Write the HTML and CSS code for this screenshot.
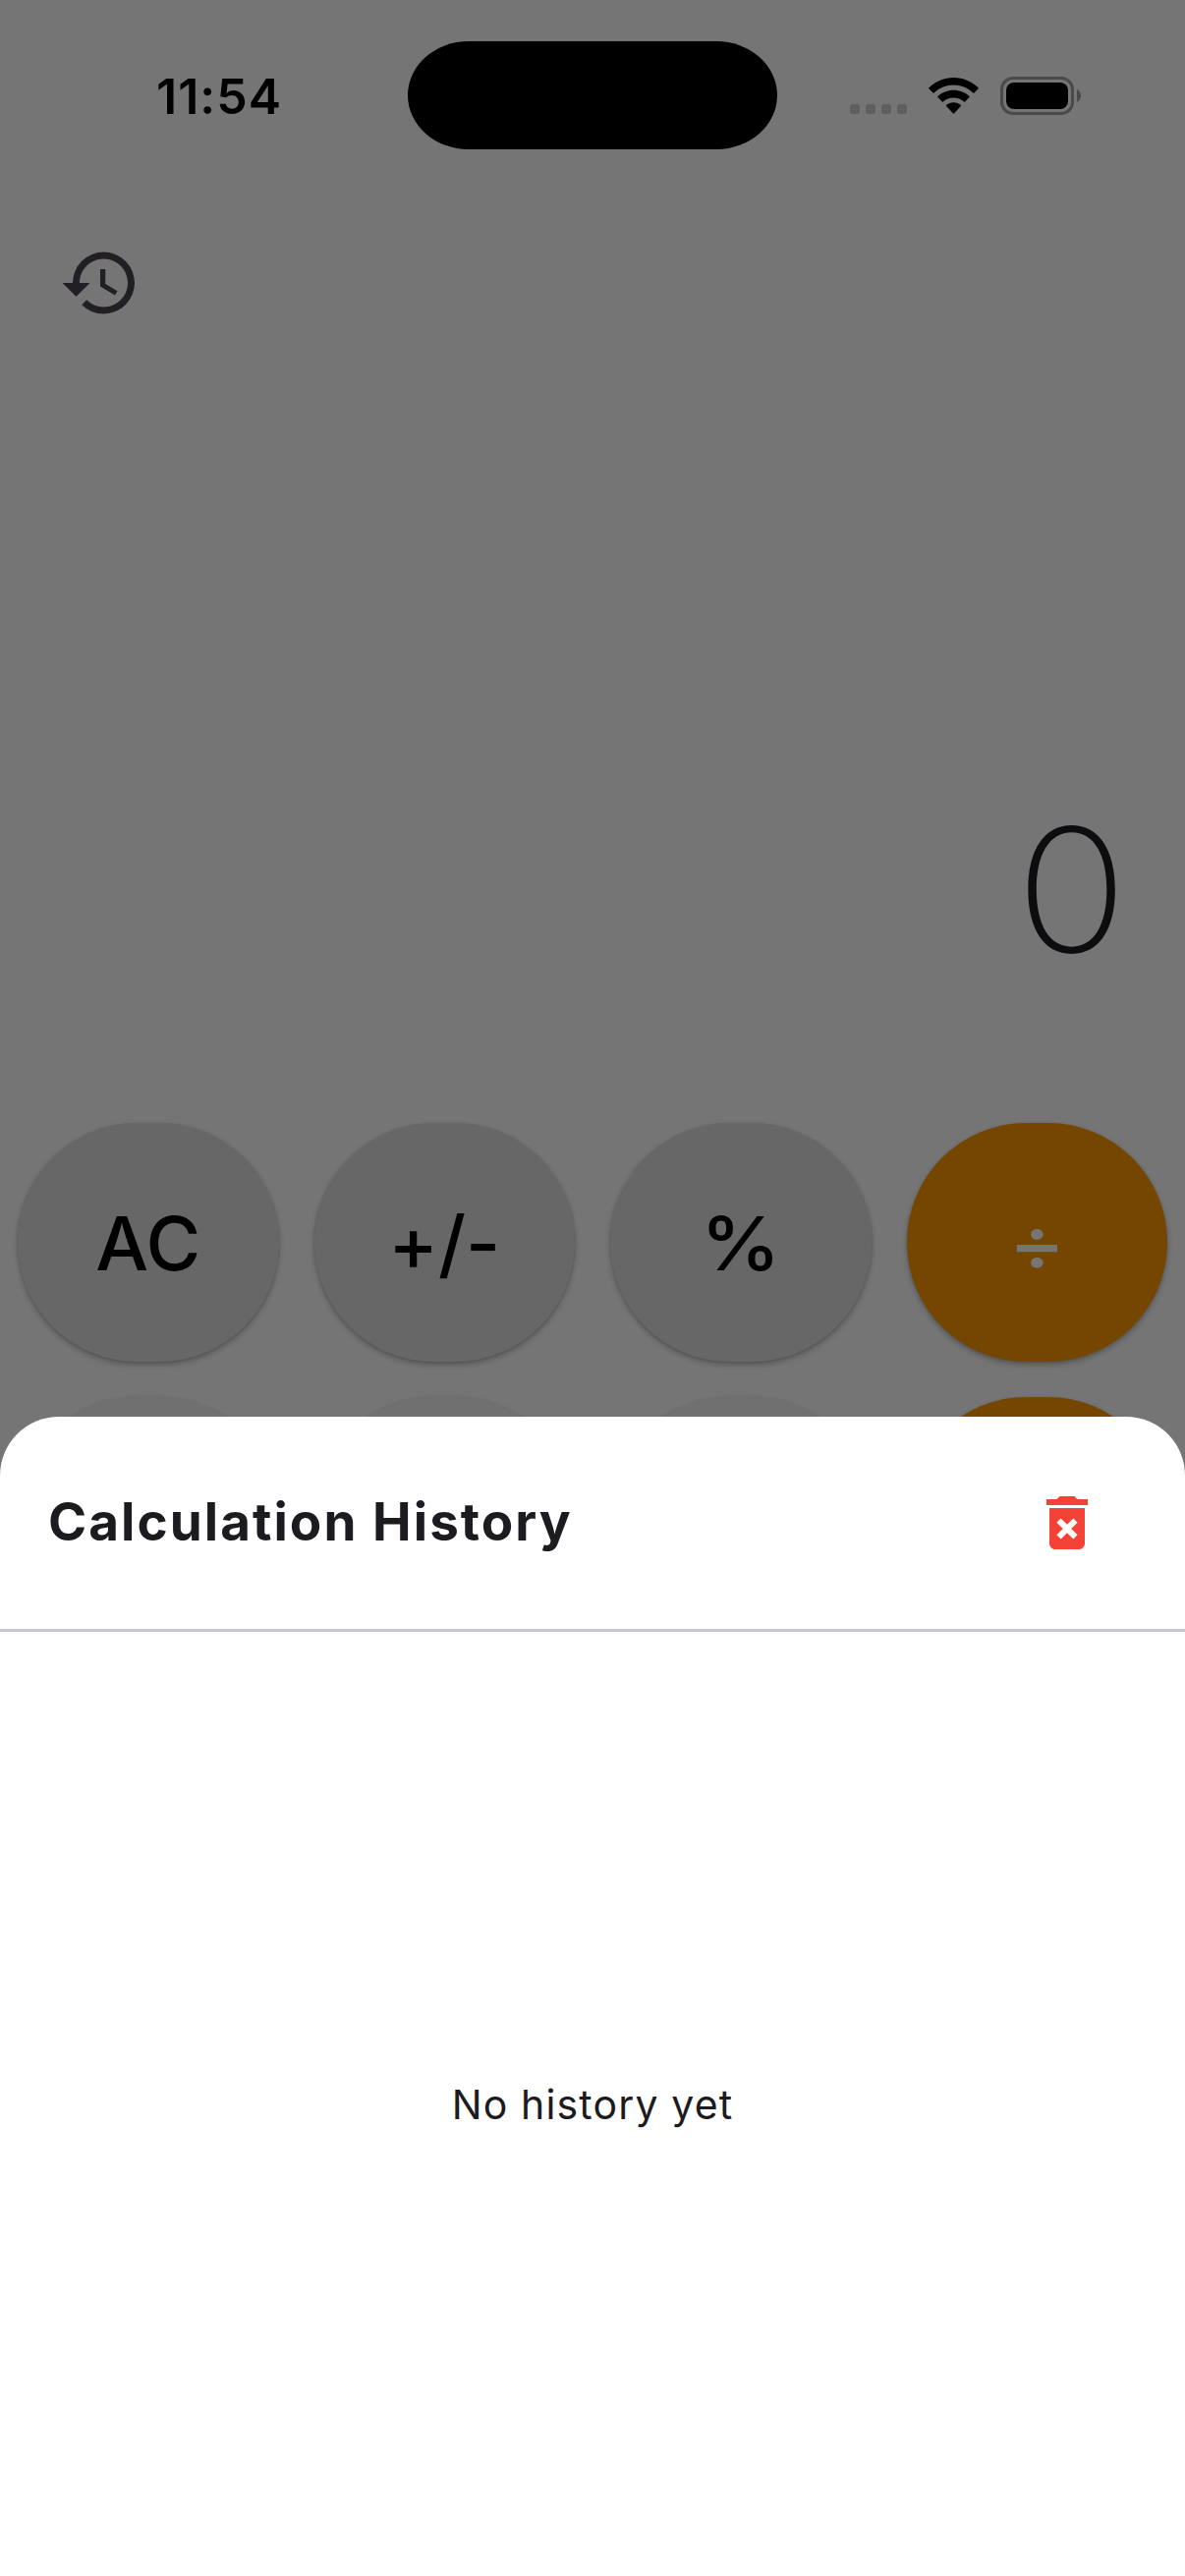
FILE: index.html
```html
<!DOCTYPE html>
<html lang="en">
<head>
<meta charset="utf-8">
<title>Calculator</title>
<link rel="stylesheet" href="styles.css">
</head>
<body>
<div class="phone">
  <main class="calculator">
    <div class="toolbar">
      <svg class="history-icon" viewBox="0 0 24 24"><path d="M13 3a9 9 0 0 0-9 9H1l3.89 3.89.07.14L9 12H6c0-3.87 3.13-7 7-7s7 3.13 7 7-3.13 7-7 7c-1.93 0-3.68-.79-4.94-2.06l-1.42 1.42A8.95 8.95 0 0 0 13 21a9 9 0 0 0 0-18zm-1 5v5l4.28 2.54.72-1.21-3.5-2.08V8H12z"/></svg>
    </div>
    <div class="display"><span class="display-value">0</span></div>
    <div class="keypad">
      <div class="key key-function">AC</div>
      <div class="key key-function">+/-</div>
      <div class="key key-function"><span class="wide-symbol">%</span></div>
      <div class="key key-operator"><span class="wide-symbol">÷</span></div>
      <div class="key"></div>
      <div class="key"></div>
      <div class="key"></div>
      <div class="key key-operator"></div>
    </div>
  </main>
  <div class="scrim"></div>
  <header class="status-bar">
    <div class="clock">11:54</div>
    <div class="island"></div>
    <div class="indicators">
      <div class="signal"><i></i><i></i><i></i><i></i></div>
      <svg class="wifi" viewBox="0 0 51 37">
        <path d="M25.500 0C35 0 44 3.800 50.600 10.300q.5.500 0 1L46.400 15.500q-.6.500-1.100 0C40 10.500 33 7.600 25.500 7.600S11 10.500 5.700 15.500q-.5.500-1.100 0L.4 11.300q-.5-.5 0-1C7 3.800 16 0 25.500 0z"/>
        <path d="M25.500 12.800c6.100 0 11.700 2.300 16 6.100q.6.500 0 1.100l-4.300 4.400q-.5.500-1.100 0c-2.900-2.500-6.600-4-10.600-4s-7.700 1.500-10.600 4q-.6.500-1.100 0L9.500 20q-.6-.6 0-1.100c4.300-3.800 9.900-6.100 16-6.100z"/>
        <path d="M25.500 25.300c2.800 0 5.300.9 7.300 2.500q.7.600.1 1.200l-6.700 7.300q-.7.700-1.400 0L18.100 29q-.6-.6.100-1.200c2-1.600 4.500-2.500 7.300-2.500z"/>
      </svg>
      <svg class="battery" viewBox="0 0 82 39">
        <rect class="battery-case" x="1.500" y="1.500" width="72" height="36" rx="11.500"/>
        <rect x="6" y="6" width="63" height="27" rx="8"/>
        <path class="battery-tip" d="M78 13c2.500 1 4 3.500 4 6.500s-1.500 5.500-4 6.500z"/>
      </svg>
    </div>
  </header>
  <section class="sheet">
    <div class="sheet-header">
      <h1 class="sheet-title">Calculation History</h1>
      <svg class="delete-icon" viewBox="0 0 24 24"><path d="M6 19c0 1.100.9 2 2 2h8c1.100 0 2-.9 2-2V7H6v12zm2.460-7.120 1.410-1.410L12 12.590l2.120-2.120 1.410 1.410L13.410 14l2.120 2.120-1.410 1.410L12 15.410l-2.120 2.120-1.410-1.410L10.590 14l-2.130-2.120zM15.500 4l-1-1h-5l-1 1H5v2h14V4z"/></svg>
    </div>
    <div class="sheet-body"><p class="empty">No history yet</p></div>
  </section>
</div>
</body>
</html>
```
FILE: styles.css
```css
* { box-sizing: border-box; }

body {
  margin: 0;
  font-family: Inter, "Liberation Sans", sans-serif;
  color: #1d1b20;
  background: #fff;
}

/* Every layer shares the one grid cell */
.phone {
  display: grid;
  grid-template: 2622px / 1206px;
  width: 1206px;
  height: 2622px;
  overflow: hidden;
}
.phone > * { grid-area: 1 / 1; }

.calculator {
  display: flex;
  flex-direction: column;
  padding-top: 246px;
}
.toolbar { height: 84px; padding-left: 60px; }
.history-icon { display: block; width: 84px; height: 84px; fill: #49454f; }

.display {
  display: flex;
  justify-content: flex-end;
  align-items: flex-end;
  height: 795px;
  padding: 0 58px 110px 0;
}
.display-value {
  font-size: 175px;
  line-height: 220px;
  font-weight: 200;
  transform: scaleX(1.08);
  transform-origin: right;
}

.keypad {
  display: grid;
  grid-template-columns: repeat(4, 265.5px);
  grid-auto-rows: 243px;
  gap: 36px;
  padding: 18px;
}
.key {
  display: flex;
  align-items: center;
  justify-content: center;
  border-radius: 122px;
  background: #f5f5f5;
  box-shadow: 0 3px 6px rgba(0, 0, 0, .26), 0 1px 3px rgba(0, 0, 0, .1);
  color: #000;
  font-size: 76px;
  line-height: 90px;
  font-weight: 460;
}
.key-function { background: #e0e0e0; }
.key-operator { background: #ff9800; color: #fff; }
.wide-symbol { transform: scaleX(1.08); }
.key-operator .wide-symbol { transform: scaleX(1.15); }

.scrim { background: rgba(0, 0, 0, .54); z-index: 1; }

.status-bar {
  z-index: 2;
  display: grid;
  grid-template-columns: 415px 376px 415px;
  height: 194px;
}
.clock {
  padding: 68px 0 0 159px;
  font-size: 50px;
  line-height: 60px;
  font-weight: 600;
  letter-spacing: 1px;
  color: #000;
}
.island {
  margin-top: 42px;
  height: 110px;
  border-radius: 62px / 55px;
  background: #000;
}
.indicators {
  display: flex;
  align-items: flex-start;
  padding: 78px 0 0 74px;
}
.signal { display: flex; gap: 6px; padding-top: 28px; }
.signal i { width: 10px; height: 10px; border-radius: 3px; background: #5f5f5f; }
.wifi { width: 51px; height: 37px; margin: 1px 0 0 22px; }
.battery { width: 82px; height: 39px; margin-left: 22px; }
.battery-case { fill: none; stroke: #4a4a4a; stroke-width: 3; }
.battery-tip { fill: #4a4a4a; }

.sheet {
  z-index: 3;
  align-self: end;
  display: flex;
  flex-direction: column;
  height: 1180px;
  border-radius: 60px 60px 0 0;
  background: #fff;
}
.sheet-header {
  display: flex;
  align-items: center;
  justify-content: space-between;
  height: 219px;
  padding: 0 84px 0 49px;
  border-bottom: 3px solid #cac4d0;
}
.sheet-title {
  margin: 0 0 3px;
  font-size: 53px;
  line-height: 72px;
  font-weight: 650;
  letter-spacing: 2.050px;
}
.delete-icon { width: 72px; height: 72px; fill: #f44336; }
.sheet-body {
  flex: 1;
  display: flex;
  align-items: center;
  justify-content: center;
}
.empty { margin: 0; font-size: 41px; line-height: 60px; letter-spacing: 1.15px; }
```
